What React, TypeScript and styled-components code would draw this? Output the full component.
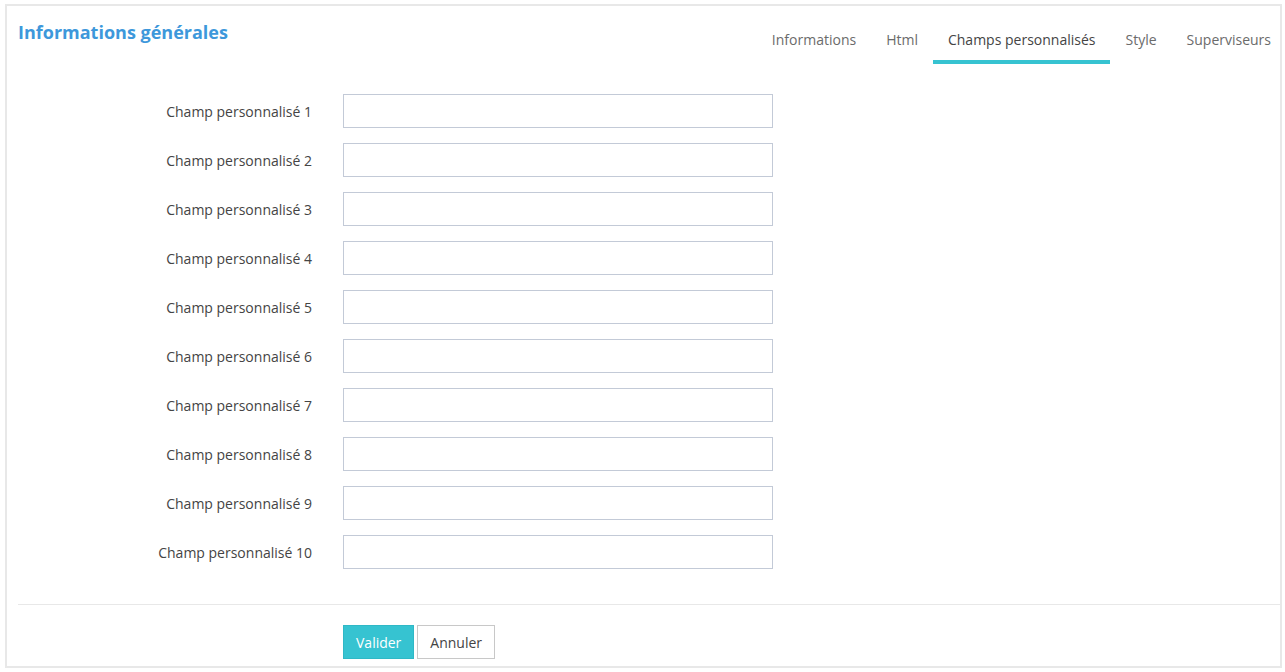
import React from 'react';
import styled, { createGlobalStyle } from 'styled-components';

const tabs = ['Informations', 'Html', 'Champs personnalisés', 'Style', 'Superviseurs'];
const fields = Array.from({ length: 10 }, (_, i) => `Champ personnalisé ${i + 1}`);

const App = () => {
  return (
    <>
      <GlobalStyle />
      <Panel>
        <Header>
          <Title>Informations générales</Title>
          <TabList>
            {tabs.map((tab) => (
              <Tab key={tab} active={tab === 'Champs personnalisés'}>
                {tab}
              </Tab>
            ))}
          </TabList>
        </Header>
        <Form>
          {fields.map((field) => (
            <Row key={field}>
              <Label>{field}</Label>
              <Input type="text" />
            </Row>
          ))}
        </Form>
        <Footer>
          <Button primary>Valider</Button>
          <Button>Annuler</Button>
        </Footer>
      </Panel>
    </>
  );
};

const GlobalStyle = createGlobalStyle`
  * {
    box-sizing: border-box;
  }

  body {
    margin: 0;
    background-color: #fff;
    font-family: "Open Sans", "Noto Sans", sans-serif;
  }
`;

const Panel = styled.section`
  width: 1277px;
  height: 664px;
  margin: 4px 0 0 5px;
  border: 2px solid #e8e8e8;
  background-color: #fff;
  display: flex;
  flex-direction: column;
`;

const Header = styled.div`
  display: flex;
  justify-content: space-between;
  align-items: flex-start;
  height: 58px;
`;

const Title = styled.h1`
  margin: 14px 0 0 11px;
  font-size: 18px;
  line-height: 24px;
  font-weight: 700;
  color: #3d98db;
`;

const TabList = styled.nav`
  display: flex;
  margin: 14px -6px 0 0;
`;

const Tab = styled.a<{ active?: boolean }>`
  padding: 10px 15px 10px;
  font-size: 14px;
  line-height: 20px;
  color: ${({ active }) => (active ? '#444' : '#6b6b6b')};
  border-bottom: 4px solid ${({ active }) => (active ? '#36c3d1' : 'transparent')};
  cursor: pointer;
`;

const Form = styled.div`
  display: flex;
  flex-direction: column;
  gap: 15px;
  padding-top: 30px;
`;

const Row = styled.div`
  display: grid;
  grid-template-columns: 305px 430px;
  column-gap: 31px;
  align-items: center;
`;

const Label = styled.label`
  text-align: right;
  font-size: 14px;
  color: #444;
`;

const Input = styled.input`
  height: 34px;
  border: 1px solid #c3cad7;
  border-radius: 0;
  padding: 6px 10px;
  font-family: inherit;
  font-size: 13px;
  outline: none;
`;

const Footer = styled.div`
  display: flex;
  gap: 3px;
  margin: 35px 0 0 11px;
  padding: 20px 0 0 325px;
  border-top: 1px solid #e8e8e8;
`;

const Button = styled.button<{ primary?: boolean }>`
  height: 34px;
  padding: 0 12px;
  font-family: inherit;
  font-size: 14px;
  border-radius: 0;
  border: 1px solid ${({ primary }) => (primary ? '#2fb8c6' : '#c8c8c8')};
  background-color: ${({ primary }) => (primary ? '#36c3d1' : '#fff')};
  color: ${({ primary }) => (primary ? '#fff' : '#444')};
  cursor: pointer;
`;

export default App;
